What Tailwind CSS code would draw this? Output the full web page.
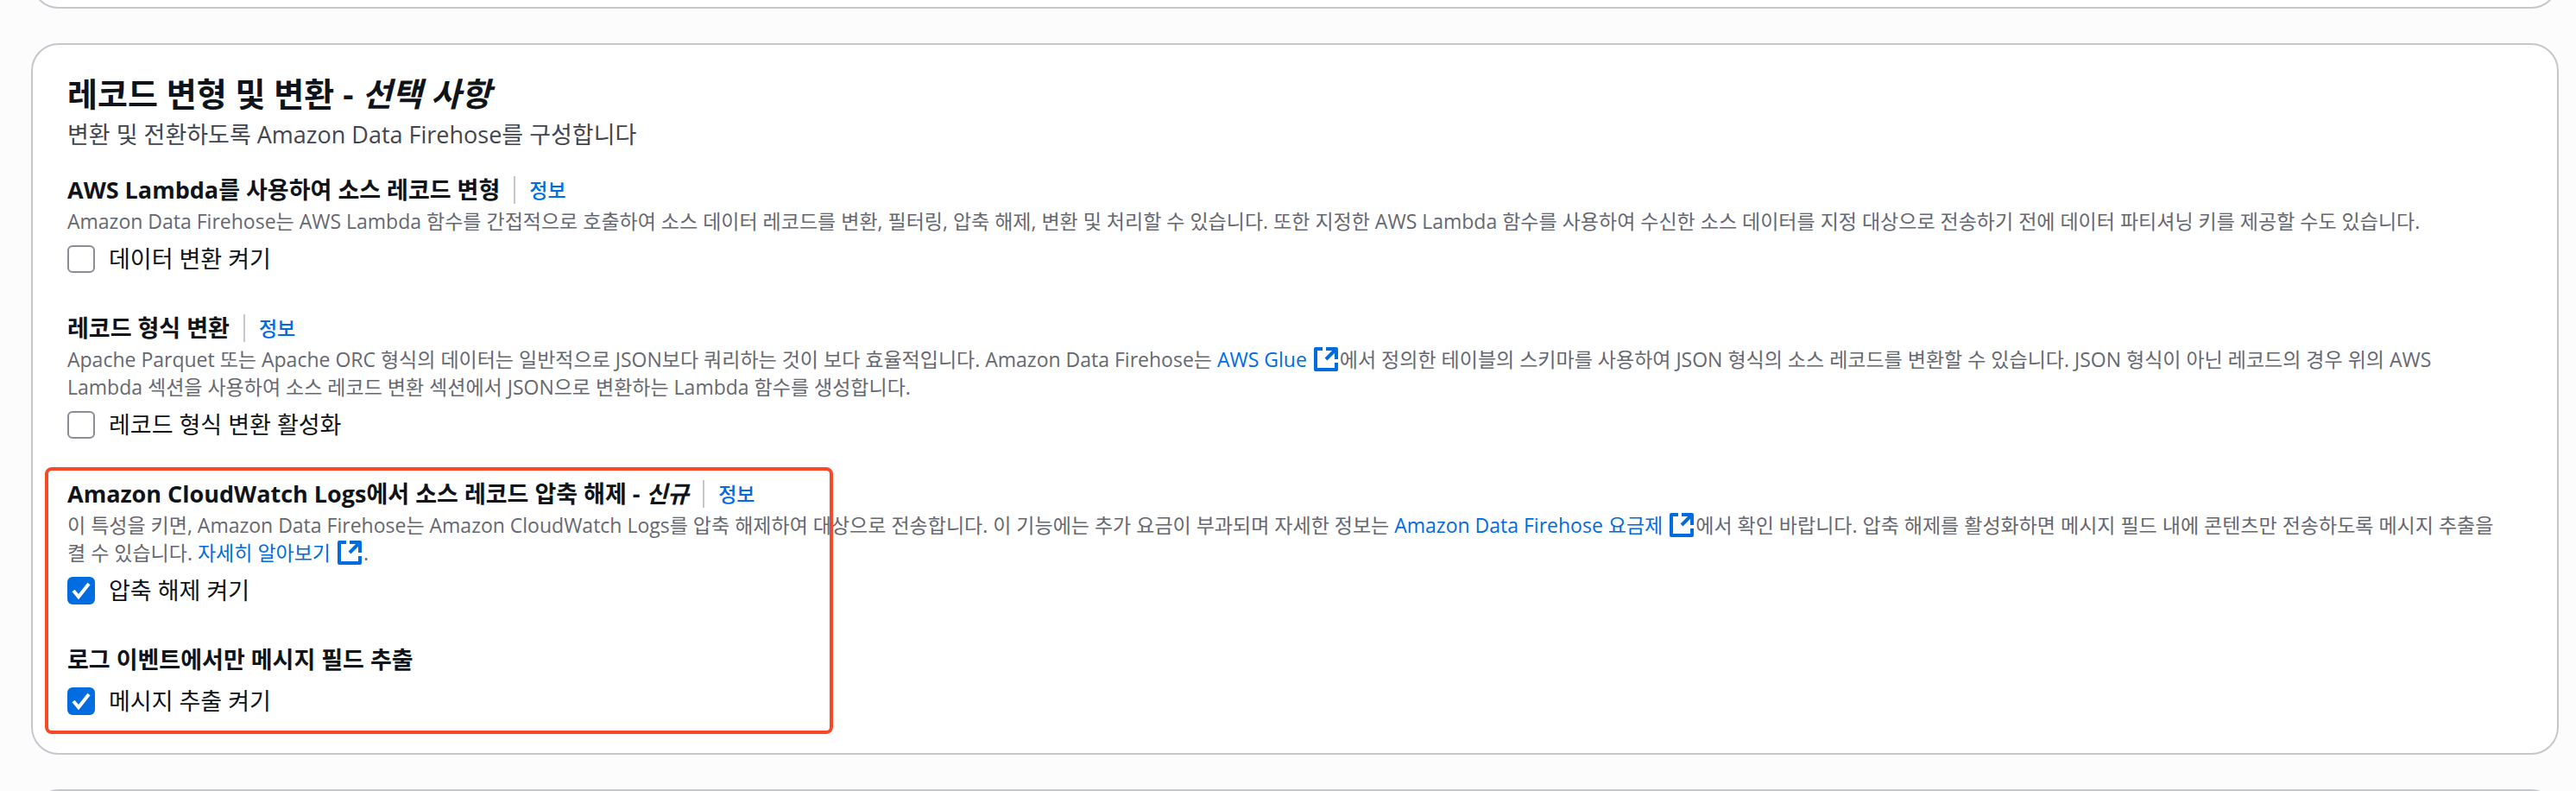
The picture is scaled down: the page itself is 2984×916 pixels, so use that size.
<!DOCTYPE html>
<html lang="ko">
  <head>
    <meta charset="UTF-8" />
    <meta name="viewport" content="width=device-width, initial-scale=1.0" />
    <title>Amazon Data Firehose</title>
    <script src="https://cdn.jsdelivr.net/npm/@tailwindcss/browser@4"></script>
  </head>
  <body
    class="h-screen overflow-hidden bg-[#fcfcfd] pl-9 pr-5 font-['Open_Sans','Noto_Sans_CJK_KR',sans-serif] text-[27px] leading-10 text-[#0f141a] break-keep"
  >
    <!-- Icons -->
    <svg class="hidden">
      <symbol id="external" viewBox="0 0 28 28">
        <path
          d="M10 2H2v24h24v-8M14 2h12v12M26 2 14 14"
          fill="none"
          stroke="currentColor"
          stroke-width="4"
          stroke-linejoin="round"
        />
      </symbol>
      <symbol id="check" viewBox="0 0 32 32">
        <path d="m7 16 6 7L25 8" fill="none" stroke="currentColor" stroke-width="4" />
      </symbol>
    </svg>

    <!-- Previous container -->
    <section class="-mt-[70px] h-20 rounded-[32px] border-2 border-[#c6c6cd] bg-white"></section>

    <main class="my-10 rounded-[32px] border-2 border-[#c6c6cd] bg-white px-10 pt-8 pb-10">
      <header class="mb-6">
        <h1 class="text-[38px] leading-[48px] font-bold">레코드 변형 및 변환 - <i>선택 사항</i></h1>
        <p class="mt-1 text-[#424650]">변환 및 전환하도록 Amazon Data Firehose를 구성합니다</p>
      </header>

      <div class="flex flex-col gap-10">
        <!-- Lambda transform -->
        <section>
          <div class="flex items-center gap-4">
            <h2 class="font-bold">AWS Lambda를 사용하여 소스 레코드 변형</h2>
            <a href="#" class="border-l-2 border-[#c6c6cd] pl-4 text-[23px] leading-8 font-medium text-[#006ce0]">정보</a>
          </div>
          <p class="pr-7 text-[23px] leading-8 text-[#656871]">
            Amazon Data Firehose는 AWS Lambda 함수를 간접적으로 호출하여 소스 데이터 레코드를 변환, 필터링, 압축 해제, 변환 및 처리할 수 있습니다. 또한 지정한 AWS Lambda 함수를 사용하여 수신한 소스 데이터를 지정 대상으로 전송하기 전에 데이터 파티셔닝 키를 제공할 수도 있습니다.
          </p>
          <div class="mt-2 flex items-center gap-4">
            <input type="checkbox" id="transform" class="size-8 appearance-none rounded-md border-2 border-[#8c8c94] bg-white" />
            <label for="transform">데이터 변환 켜기</label>
          </div>
        </section>

        <!-- Format conversion -->
        <section>
          <div class="flex items-center gap-4">
            <h2 class="font-bold">레코드 형식 변환</h2>
            <a href="#" class="border-l-2 border-[#c6c6cd] pl-4 text-[23px] leading-8 font-medium text-[#006ce0]">정보</a>
          </div>
          <p class="pr-7 text-[23px] leading-8 text-[#656871]">
            Apache Parquet 또는 Apache ORC 형식의 데이터는 일반적으로 JSON보다 쿼리하는 것이 보다 효율적입니다. Amazon Data Firehose는
            <a href="#" class="text-[#006ce0]">AWS Glue <svg class="mx-0.5 inline size-7 align-[-5px]"><use href="#external" /></svg></a>에서 정의한 테이블의 스키마를 사용하여 JSON 형식의 소스 레코드를 변환할 수 있습니다. JSON 형식이 아닌 레코드의 경우 위의 AWS Lambda 섹션을 사용하여 소스 레코드 변환 섹션에서 JSON으로 변환하는 Lambda 함수를 생성합니다.
          </p>
          <div class="mt-2 flex items-center gap-4">
            <input type="checkbox" id="format" class="size-8 appearance-none rounded-md border-2 border-[#8c8c94] bg-white" />
            <label for="format">레코드 형식 변환 활성화</label>
          </div>
        </section>

        <div class="relative flex flex-col gap-10">
          <!-- Decompression -->
          <section>
            <div class="flex items-center gap-4">
              <h2 class="font-bold">Amazon CloudWatch Logs에서 소스 레코드 압축 해제 - <i>신규</i></h2>
              <a href="#" class="border-l-2 border-[#c6c6cd] pl-4 text-[23px] leading-8 font-medium text-[#006ce0]">정보</a>
            </div>
            <p class="pr-7 text-[23px] leading-8 text-[#656871]">
              이 특성을 키면, Amazon Data Firehose는 Amazon CloudWatch Logs를 압축 해제하여 대상으로 전송합니다. 이 기능에는 추가 요금이 부과되며 자세한 정보는
              <a href="#" class="text-[#006ce0]">Amazon Data Firehose 요금제 <svg class="mx-0.5 inline size-7 align-[-5px]"><use href="#external" /></svg></a>에서 확인 바랍니다. 압축 해제를 활성화하면 메시지 필드 내에 콘텐츠만 전송하도록 메시지 추출을 켤 수 있습니다.
              <a href="#" class="text-[#006ce0]">자세히 알아보기 <svg class="mx-0.5 inline size-7 align-[-5px]"><use href="#external" /></svg></a>.
            </p>
            <div class="mt-2 flex items-center gap-4">
              <span class="relative flex">
                <input type="checkbox" id="decompress" checked class="peer size-8 appearance-none rounded-md border-2 border-[#8c8c94] bg-white checked:border-[#006ce0] checked:bg-[#006ce0]" />
                <svg class="pointer-events-none absolute inset-0 hidden size-8 text-white peer-checked:block"><use href="#check" /></svg>
              </span>
              <label for="decompress">압축 해제 켜기</label>
            </div>
          </section>

          <!-- Message extraction -->
          <section>
            <h2 class="font-bold">로그 이벤트에서만 메시지 필드 추출</h2>
            <div class="mt-2 flex items-center gap-4">
              <span class="relative flex">
                <input type="checkbox" id="extract" checked class="peer size-8 appearance-none rounded-md border-2 border-[#8c8c94] bg-white checked:border-[#006ce0] checked:bg-[#006ce0]" />
                <svg class="pointer-events-none absolute inset-0 hidden size-8 text-white peer-checked:block"><use href="#check" /></svg>
              </span>
              <label for="extract">메시지 추출 켜기</label>
            </div>
          </section>

          <!-- Highlight frame -->
          <div class="pointer-events-none absolute -top-[11px] -bottom-[18px] -left-[26px] w-[913px] rounded-lg border-4 border-[#f54927]"></div>
        </div>
      </div>
    </main>

    <!-- Next container -->
    <section class="h-20 rounded-[32px] border-2 border-[#c6c6cd] bg-white"></section>
  </body>
</html>
